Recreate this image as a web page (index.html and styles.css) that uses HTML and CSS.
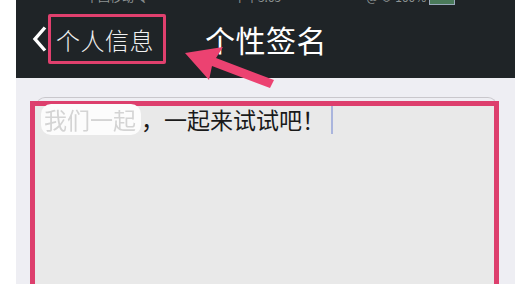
FILE: index.html
```html
<!DOCTYPE html>
<html lang="zh">
<head>
<meta charset="utf-8">
<link rel="stylesheet" href="styles.css">
</head>
<body>
<div class="screen">
  <header class="navbar">
    <div class="status">
      <span>中国移动 令</span>
      <span>下午3:05</span>
      <span>@ ⊕ 100% <span class="battery"></span></span>
    </div>
    <div class="navrow">
      <span class="chev"><svg width="15" height="26" viewBox="0 0 15 26"><path d="M13 1.5 L3 13 L13 24.5" fill="none" stroke="#fff" stroke-width="3.4"/></svg></span>
      <span class="backbox">个人信息</span>
      <h1 class="title">个性签名</h1>
    </div>
  </header>
  <main class="content">
    <div class="field">
      <div class="mark">
        <p class="line"><span class="blur">我们一起</span>，一起来试试吧！<span class="caret"></span></p>
      </div>
    </div>
  </main>
  <svg class="arrow" width="120" height="60" viewBox="0 0 120 60"><path d="M3 13 L41 7 L34 18 L92 40 L88 48 L30 26 L27 40 Z" fill="#ec4271"/></svg>
</div>
</body>
</html>
```
FILE: styles.css
```css
html, body { margin: 0; padding: 0; background: #fff; }
body { font-family: "Noto Sans CJK SC", "Noto Sans", sans-serif; }
.screen { position: relative; margin-left: 16px; width: 499px; height: 284px; overflow: hidden; background: #eeeef3; }
.navbar { height: 78px; background: #1f2427; color: #fff; display: flex; flex-direction: column; }
.status { height: 6px; overflow: hidden; display: flex; justify-content: space-between; font-size: 12px; line-height: 12px; color: #8e9494; padding: 0 60px 0 70px; }
.status > span { margin-top: -9px; display: block; }
.battery { display: inline-block; width: 24px; height: 10px; border: 1px solid #9ab; background: #4a7a5a; vertical-align: middle; }
.navrow { display: flex; align-items: center; height: 72px; margin-top: -3px; }
.chev { display: flex; margin-left: 16px; width: 16px; }
.backbox { box-sizing: border-box; height: 50px; width: 118px; border: 3px solid #e0406e; border-radius: 2px; display: flex; align-items: center; padding-left: 5px; font-size: 24px; letter-spacing: 0.5px; color: #f0f0f0; font-weight: 300; }
.title { margin: 0 0 0 39px; font-size: 30px; font-weight: normal; letter-spacing: 0.5px; color: #fff; }
.content { padding: 19px 18px 0 20px; }
.field { border: 1px solid #c9c7cc; border-bottom: none; border-radius: 9px 9px 0 0; height: 220px; }
.mark { margin: 3px -3px 0 -7px; height: 220px; border: 5px solid #dd3f6d; border-bottom: none; background: #e9e9e9; }
.line { margin: -2px 0 0; padding: 0 0 0 6px; font-size: 23px; line-height: 31px; color: #1a1a1a; display: flex; align-items: center; }
.blur { background: #fcfcfc; color: #d4d4d4; border-radius: 10px; padding: 0 5px 0 3px; filter: blur(0.6px); }
.caret { display: inline-block; width: 2px; height: 28px; background: #aab5dd; margin-left: 6px; }
.arrow { position: absolute; left: 166px; top: 40px; }
```
